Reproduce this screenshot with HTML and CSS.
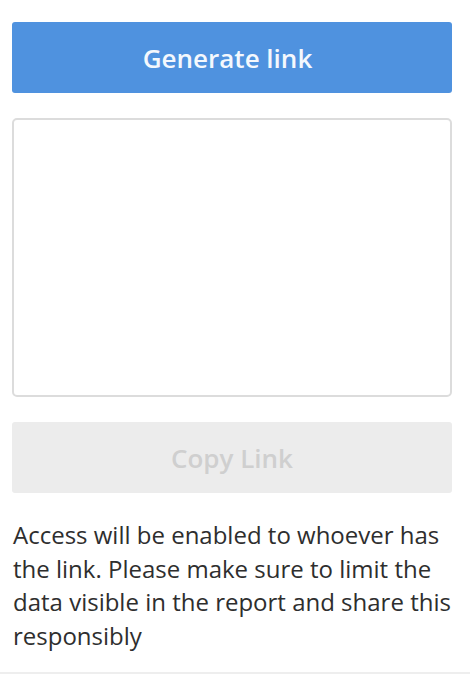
FILE: index.html
```html
<!DOCTYPE html>
<html>
<head>
<meta charset="utf-8">
<link rel="stylesheet" href="styles.css">
</head>
<body>
<div class="panel">
  <button class="btn btn-primary">Generate link</button>
  <textarea class="link-box" readonly></textarea>
  <button class="btn btn-disabled" disabled>Copy Link</button>
  <p class="note">Access will be enabled to whoever has the link. Please make sure to limit the data visible in the report and share this responsibly</p>
</div>
<div class="footer-line"></div>
</body>
</html>
```
FILE: styles.css
```css
html, body {
  margin: 0;
  padding: 0;
  background: #ffffff;
}
body {
  font-family: "Open Sans", "Liberation Sans", sans-serif;
  width: 470px;
}
.panel {
  display: flex;
  flex-direction: column;
  gap: 25px;
  padding: 22px 18px 0 12px;
}
.btn {
  flex-shrink: 0;
  height: 71px;
  border: none;
  border-radius: 3px;
  font-family: "Open Sans", "Liberation Sans", sans-serif;
  font-size: 26px;
  font-weight: 600;
  width: 100%;
  padding: 0;
}
.btn-primary {
  background: #4f92df;
  color: #f4f8fd;
  padding-right: 9px;
}
.btn-disabled {
  background: #ececec;
  color: #cfcfcf;
}
.link-box {
  flex-shrink: 0;
  height: 279px;
  width: 100%;
  box-sizing: border-box;
  border: 2px solid #dcdcdc;
  border-radius: 5px;
  resize: none;
  background: #fff;
  margin: 0;
}
.note {
  margin: 0 0 0 1px;
  font-size: 24px;
  line-height: 33.5px;
  color: #2e2e2e;
}
.footer-line {
  height: 2px;
  background: #eeeeee;
  margin-top: 20px;
}
```
